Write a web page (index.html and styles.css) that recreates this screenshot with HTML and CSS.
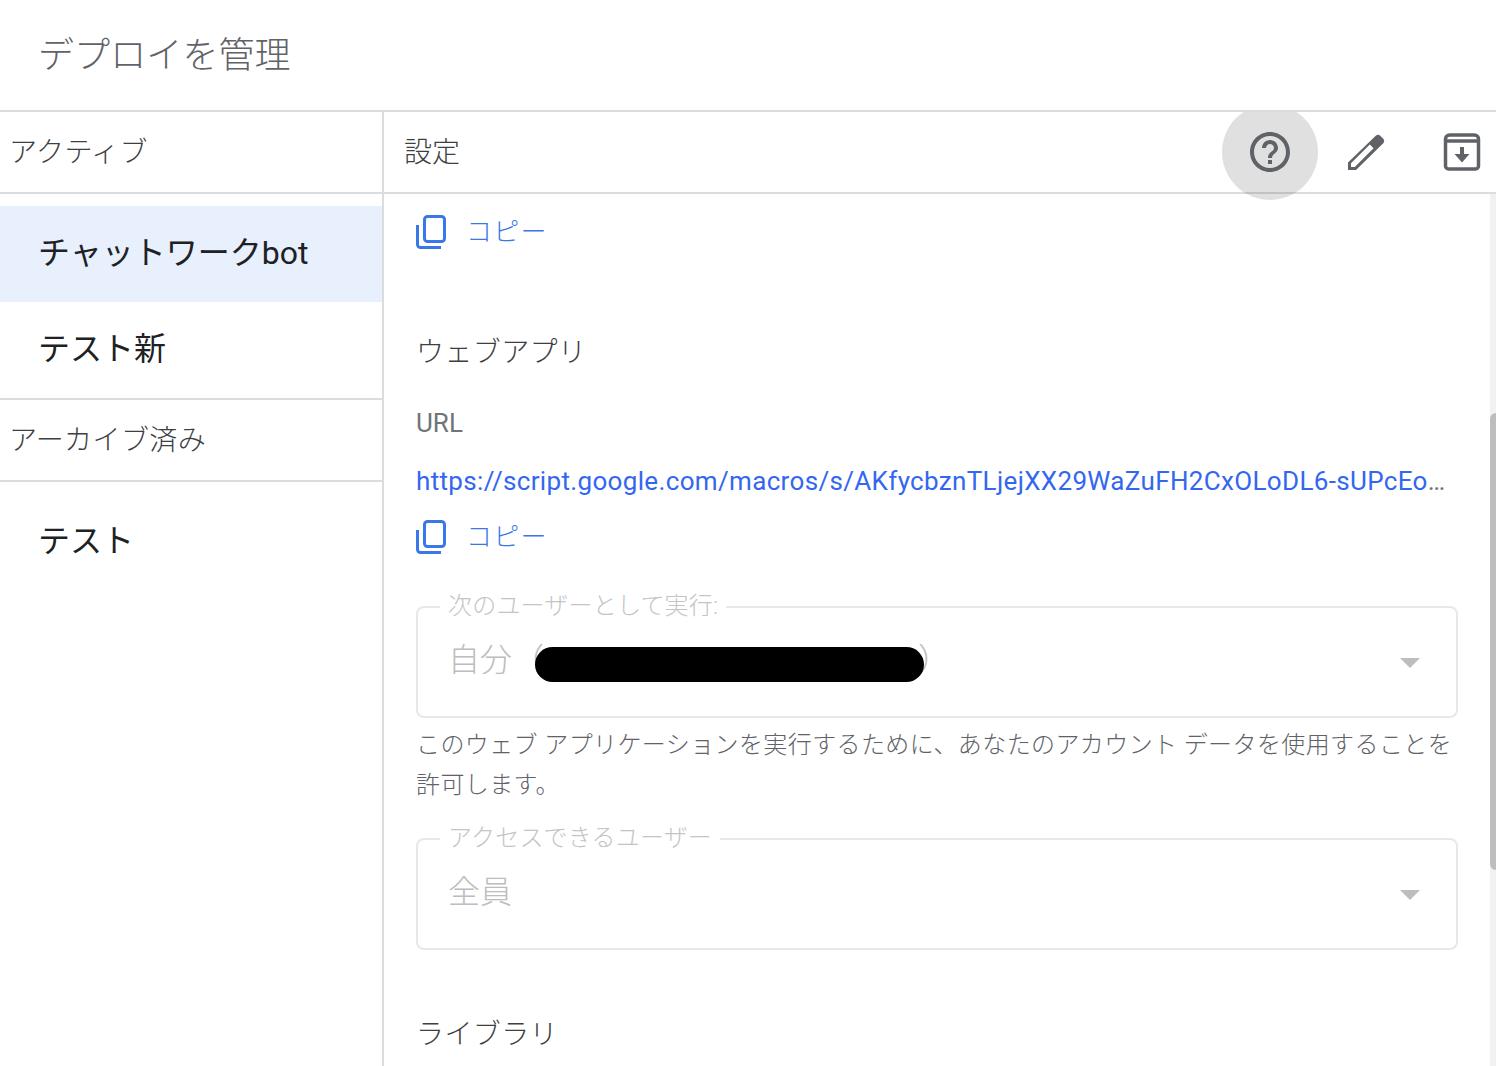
FILE: index.html
```html
<!DOCTYPE html>
<html lang="ja">
<head>
<meta charset="utf-8">
<title>デプロイを管理</title>
<link rel="stylesheet" href="styles.css">
</head>
<body>
<div class="dialog">
  <header class="title-bar"><h1 class="title">デプロイを管理</h1></header>
  <div class="columns">
    <aside class="sidebar">
      <div class="side-head"><span class="side-head-text">アクティブ</span></div>
      <ul class="side-list">
        <li class="side-item selected"><span class="side-item-text">チャットワークbot</span></li>
        <li class="side-item"><span class="side-item-text">テスト新</span></li>
      </ul>
      <div class="side-head archived"><span class="side-head-text">アーカイブ済み</span></div>
      <ul class="side-list">
        <li class="side-item"><span class="side-item-text">テスト</span></li>
      </ul>
    </aside>
    <main class="detail">
      <div class="toolbar">
        <div class="toolbar-label">設定</div>
        <div class="tools">
          <button class="tool active" aria-label="ヘルプ">
            <svg class="tool-icon" viewBox="0 0 24 24"><path d="M11 18h2v-2h-2v2zm1-16C6.48 2 2 6.48 2 12s4.48 10 10 10 10-4.48 10-10S17.52 2 12 2zm0 18c-4.41 0-8-3.59-8-8s3.59-8 8-8 8 3.59 8 8-3.59 8-8 8zm0-14c-2.21 0-4 1.79-4 4h2c0-1.1.9-2 2-2s2 .9 2 2c0 2-3 1.75-3 5h2c0-2.25 3-2.5 3-5 0-2.21-1.79-4-4-4z"/></svg>
          </button>
          <button class="tool" aria-label="編集">
            <svg class="tool-icon" viewBox="0 0 48 48"><path fill-rule="evenodd" d="M6 42V34.500L34 7.500Q36 6 38 7.500L41.500 11Q43 13 41.500 15L14 42ZM9 39H12.800L31.600 20.200 27.800 16.400 9 35.200Z"/></svg>
          </button>
          <button class="tool" aria-label="アーカイブ">
            <svg class="tool-icon" viewBox="0 0 48 48"><path class="icon-line" d="M11.500 7H36.500A4 4 0 0 1 40.500 11V38A3 3 0 0 1 37.500 41H10.500A3 3 0 0 1 7.500 38V11A4 4 0 0 1 11.500 7ZM7.500 13H40.500"/><path d="M22 19h4v7h5.500L24 34.500 16.500 26H22z"/></svg>
          </button>
        </div>
      </div>
      <div class="pane">
        <div class="scroll-content">
          <a class="copy first"><svg class="copy-icon" viewBox="0 0 30 34"><rect x="8.500" y="1.500" width="20" height="25" rx="3"/><path d="M1.500 10V29.500A3 3 0 0 0 4.500 32.500H25"/></svg><span>コピー</span></a>
          <h2 class="section-title web">ウェブアプリ</h2>
          <div class="url-label">URL</div>
          <div class="url"><span class="url-link">https://script.google.com/macros/s/AKfycbznTLjejXX29WaZuFH2CxOLoDL6-sUPcEo</span></div>
          <a class="copy"><svg class="copy-icon" viewBox="0 0 30 34"><rect x="8.500" y="1.500" width="20" height="25" rx="3"/><path d="M1.500 10V29.500A3 3 0 0 0 4.500 32.500H25"/></svg><span>コピー</span></a>
          <div class="field run-as">
            <span class="field-label">次のユーザーとして実行:</span>
            <span class="field-value">自分<span class="paren">（</span><span class="redacted"></span><span class="paren close">）</span></span>
            <span class="arrow"></span>
          </div>
          <p class="hint">このウェブ アプリケーションを実行するために、あなたのアカウント データを使用することを許可します。</p>
          <div class="field access">
            <span class="field-label">アクセスできるユーザー</span>
            <span class="field-value">全員</span>
            <span class="arrow"></span>
          </div>
          <h2 class="section-title library">ライブラリ</h2>
        </div>
        <div class="scrollbar"><div class="thumb"></div></div>
      </div>
    </main>
  </div>
</div>
</body>
</html>
```
FILE: styles.css
```css
* { box-sizing: border-box; }
html, body { margin: 0; height: 100%; overflow: hidden; background: #fff; }
body {
  font-family: Roboto, "Noto Sans CJK JP", sans-serif;
  font-weight: 300;
  color: #3c4043;
}
.dialog { height: 1066px; display: flex; flex-direction: column; overflow: hidden; }
.title-bar {
  position: relative; z-index: 2; height: 112px; flex: none;
  background: #fff; border-bottom: 2px solid #dadce0;
  padding-left: 38px; display: flex; align-items: center;
}
.title { margin: 0 0 6px; font-size: 36px; font-weight: 300; color: #5f6368; letter-spacing: .1px; }
.columns { flex: 1; display: flex; min-height: 0; }
.sidebar { width: 384px; flex: none; border-right: 2px solid #dadce0; }
.side-head {
  height: 82px; border-bottom: 2px solid #dadce0; padding-left: 9px; padding-bottom: 4px;
  display: flex; align-items: center; font-size: 28px; color: #3c4043; letter-spacing: .4px;
}
.side-head.archived { border-top: 2px solid #dadce0; height: 84px; }
.side-list { list-style: none; margin: 0; padding: 12px 0 0; }
.side-item {
  height: 96px; padding-left: 38px; padding-bottom: 8px; display: flex; align-items: center;
  font-size: 32px; color: #202124; font-weight: 400;
}
.side-item.selected { background: #e8f0fe; }
.detail { flex: 1; min-width: 0; display: flex; flex-direction: column; }
.toolbar {
  height: 82px; flex: none; border-bottom: 2px solid #dadce0; padding-left: 20px;
  display: flex; align-items: center; justify-content: space-between;
}
.toolbar-label { font-size: 28px; color: #3c4043; margin-bottom: 4px; }
.tools { display: flex; margin-right: -14px; }
.tool {
  width: 96px; height: 96px; border: 0; padding: 0; background: transparent;
  border-radius: 50%; display: flex; align-items: center; justify-content: center;
}
.tool.active { background: rgba(60, 64, 67, .16); }
.tool-icon { width: 48px; height: 48px; fill: #5f6368; }
.icon-line { fill: none; stroke: #5f6368; stroke-width: 3.500; }
.pane { flex: 1; min-height: 0; display: flex; overflow: hidden; }
.scroll-content { flex: 1; min-width: 0; padding: 20px 32px 0 32px; }
.scrollbar { width: 6px; flex: none; background: #f1f1f1; padding-top: 219px; }
.thumb { height: 457px; background: #bdbdbd; border-radius: 6px 0 0 6px; }
.copy {
  display: flex; align-items: center; gap: 20px; height: 36px;
  color: #3b78e7; font-size: 26px; letter-spacing: 1.300px;
}
.copy-icon { width: 30px; height: 34px; fill: none; stroke: #3b78e7; stroke-width: 3; flex: none; }
.copy span { margin-bottom: 6px; }
.section-title { margin: 0; font-size: 28px; font-weight: 300; color: #3c4043; line-height: 40px; letter-spacing: .4px; }
.section-title.web { margin-top: 83px; }
.url-label { margin-top: 30px; font-size: 26px; line-height: 40px; font-weight: 400; color: #70757a; }
.url {
  margin-top: 18px; font-size: 26px; line-height: 40px; color: #70757a; font-weight: 400;
  letter-spacing: .34px; white-space: nowrap;
}
.url::after { content: "…"; }
.url-link { color: #3367f0; }
.url + .copy { margin-top: 18px; }
.field {
  position: relative; height: 112px; border: 2px solid #e8e8e8; border-radius: 8px;
  display: flex; align-items: center; justify-content: space-between;
  padding: 0 36px 0 30px;
}
.run-as { margin-top: 51px; }
.access { margin-top: 33px; }
.field-label {
  position: absolute; left: 22px; top: -18px; padding: 0 8px; background: #fff;
  font-size: 24px; line-height: 32px; color: #c4c4c4; letter-spacing: .2px;
}
.field-value { font-size: 32px; color: #bdbdbd; display: flex; align-items: center; margin-bottom: 10px; white-space: nowrap; }
.redacted {
  display: block; width: 389px; height: 35px; background: #000; border-radius: 18px;
  margin-left: -9px; position: relative; top: 7px;
}
.paren.close { margin-left: -6px; }
.arrow {
  width: 0; height: 0; border-style: solid; border-width: 10px 10px 0;
  border-color: #bdbdbd transparent transparent; margin-top: 2px;
}
.hint { margin: 7px 0 0; font-size: 24px; line-height: 40px; color: #5f6368; letter-spacing: .4px; }
.section-title.library { margin-top: 65px; }
```
